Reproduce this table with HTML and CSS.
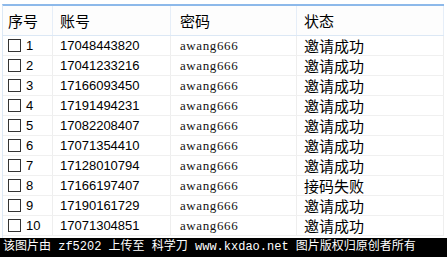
FILE: index.html
```html
<!DOCTYPE html>
<html>
<head>
<meta charset="utf-8">
<link rel="stylesheet" href="styles.css">
</head>
<body>
<div class="page">
  <div class="grid">
    <div class="row head">
      <div class="c c1">序号</div>
      <div class="c c2">账号</div>
      <div class="c c3">密码</div>
      <div class="c c4">状态</div>
    </div>
    <div class="row"><div class="c c1"><span class="box"></span><span class="n">1</span></div><div class="c c2">17048443820</div><div class="c c3 pw">awang666</div><div class="c c4">邀请成功</div></div>
    <div class="row"><div class="c c1"><span class="box"></span><span class="n">2</span></div><div class="c c2">17041233216</div><div class="c c3 pw">awang666</div><div class="c c4">邀请成功</div></div>
    <div class="row"><div class="c c1"><span class="box"></span><span class="n">3</span></div><div class="c c2">17166093450</div><div class="c c3 pw">awang666</div><div class="c c4">邀请成功</div></div>
    <div class="row"><div class="c c1"><span class="box"></span><span class="n">4</span></div><div class="c c2">17191494231</div><div class="c c3 pw">awang666</div><div class="c c4">邀请成功</div></div>
    <div class="row"><div class="c c1"><span class="box"></span><span class="n">5</span></div><div class="c c2">17082208407</div><div class="c c3 pw">awang666</div><div class="c c4">邀请成功</div></div>
    <div class="row"><div class="c c1"><span class="box"></span><span class="n">6</span></div><div class="c c2">17071354410</div><div class="c c3 pw">awang666</div><div class="c c4">邀请成功</div></div>
    <div class="row"><div class="c c1"><span class="box"></span><span class="n">7</span></div><div class="c c2">17128010794</div><div class="c c3 pw">awang666</div><div class="c c4">邀请成功</div></div>
    <div class="row"><div class="c c1"><span class="box"></span><span class="n">8</span></div><div class="c c2">17166197407</div><div class="c c3 pw">awang666</div><div class="c c4">接码失败</div></div>
    <div class="row"><div class="c c1"><span class="box"></span><span class="n">9</span></div><div class="c c2">17190161729</div><div class="c c3 pw">awang666</div><div class="c c4">邀请成功</div></div>
    <div class="row"><div class="c c1"><span class="box"></span><span class="n">10</span></div><div class="c c2">17071304851</div><div class="c c3 pw">awang666</div><div class="c c4">邀请成功</div></div>
  </div>
  <div class="foot">该图片由 zf5202 上传至 科学刀 www.kxdao.net 图片版权归原创者所有</div>
</div>
</body>
</html>
```
FILE: styles.css
```css
html, body {
  margin: 0;
  padding: 0;
  background: #ffffff;
}
.page {
  width: 447px;
  height: 257px;
  display: flex;
  flex-direction: column;
  overflow: hidden;
  font-family: "Liberation Sans", "Noto Sans CJK SC", sans-serif;
  color: #000;
}
.grid {
  margin-top: 4px;
  border-top: 2px solid #8db9ea;
  margin-left: 2px;
  border-left: 1px solid #dce8f5;
  width: 441px;
  height: 232px;
  display: flex;
  flex-direction: column;
}
.row {
  display: flex;
  height: 20px;
  border-bottom: 1px solid #f0f0f0;
  box-sizing: border-box;
}
.row.head {
  height: 30px;
  background: #fdfdfd;
  border-bottom: 1px solid #dce8f5;
  font-size: 15px;
}
.c {
  display: flex;
  align-items: center;
  border-right: 1px solid #eeeeee;
  box-sizing: border-box;
  white-space: nowrap;
  font-size: 13px;
}
.head .c {
  font-size: 15px;
  border-right-color: #e6eef8;
}
.c1 { width: 50px; padding-left: 5px; }
.c2 { width: 118px; padding-left: 7px; }
.c3 { width: 126px; padding-left: 9px; }
.c4 { width: 147px; padding-left: 7px; font-size: 15px; border-right: 1px solid #eeeeee; }
.pw {
  font-family: "Liberation Serif", serif;
  font-size: 13px;
  letter-spacing: 0.6px;
  color: #111;
}
.box {
  width: 11px;
  height: 11px;
  border: 1px solid #333;
  background: #fff;
  margin-right: 5px;
  flex: none;
}
.n { font-size: 13px; }
.foot {
  margin-top: auto;
  height: 19px;
  background: #000;
  color: #fff;
  font-size: 12px;
  line-height: 19px;
  padding-left: 3px;
  white-space: nowrap;
  font-family: "Liberation Mono", "Noto Sans CJK SC", monospace;
}
```
